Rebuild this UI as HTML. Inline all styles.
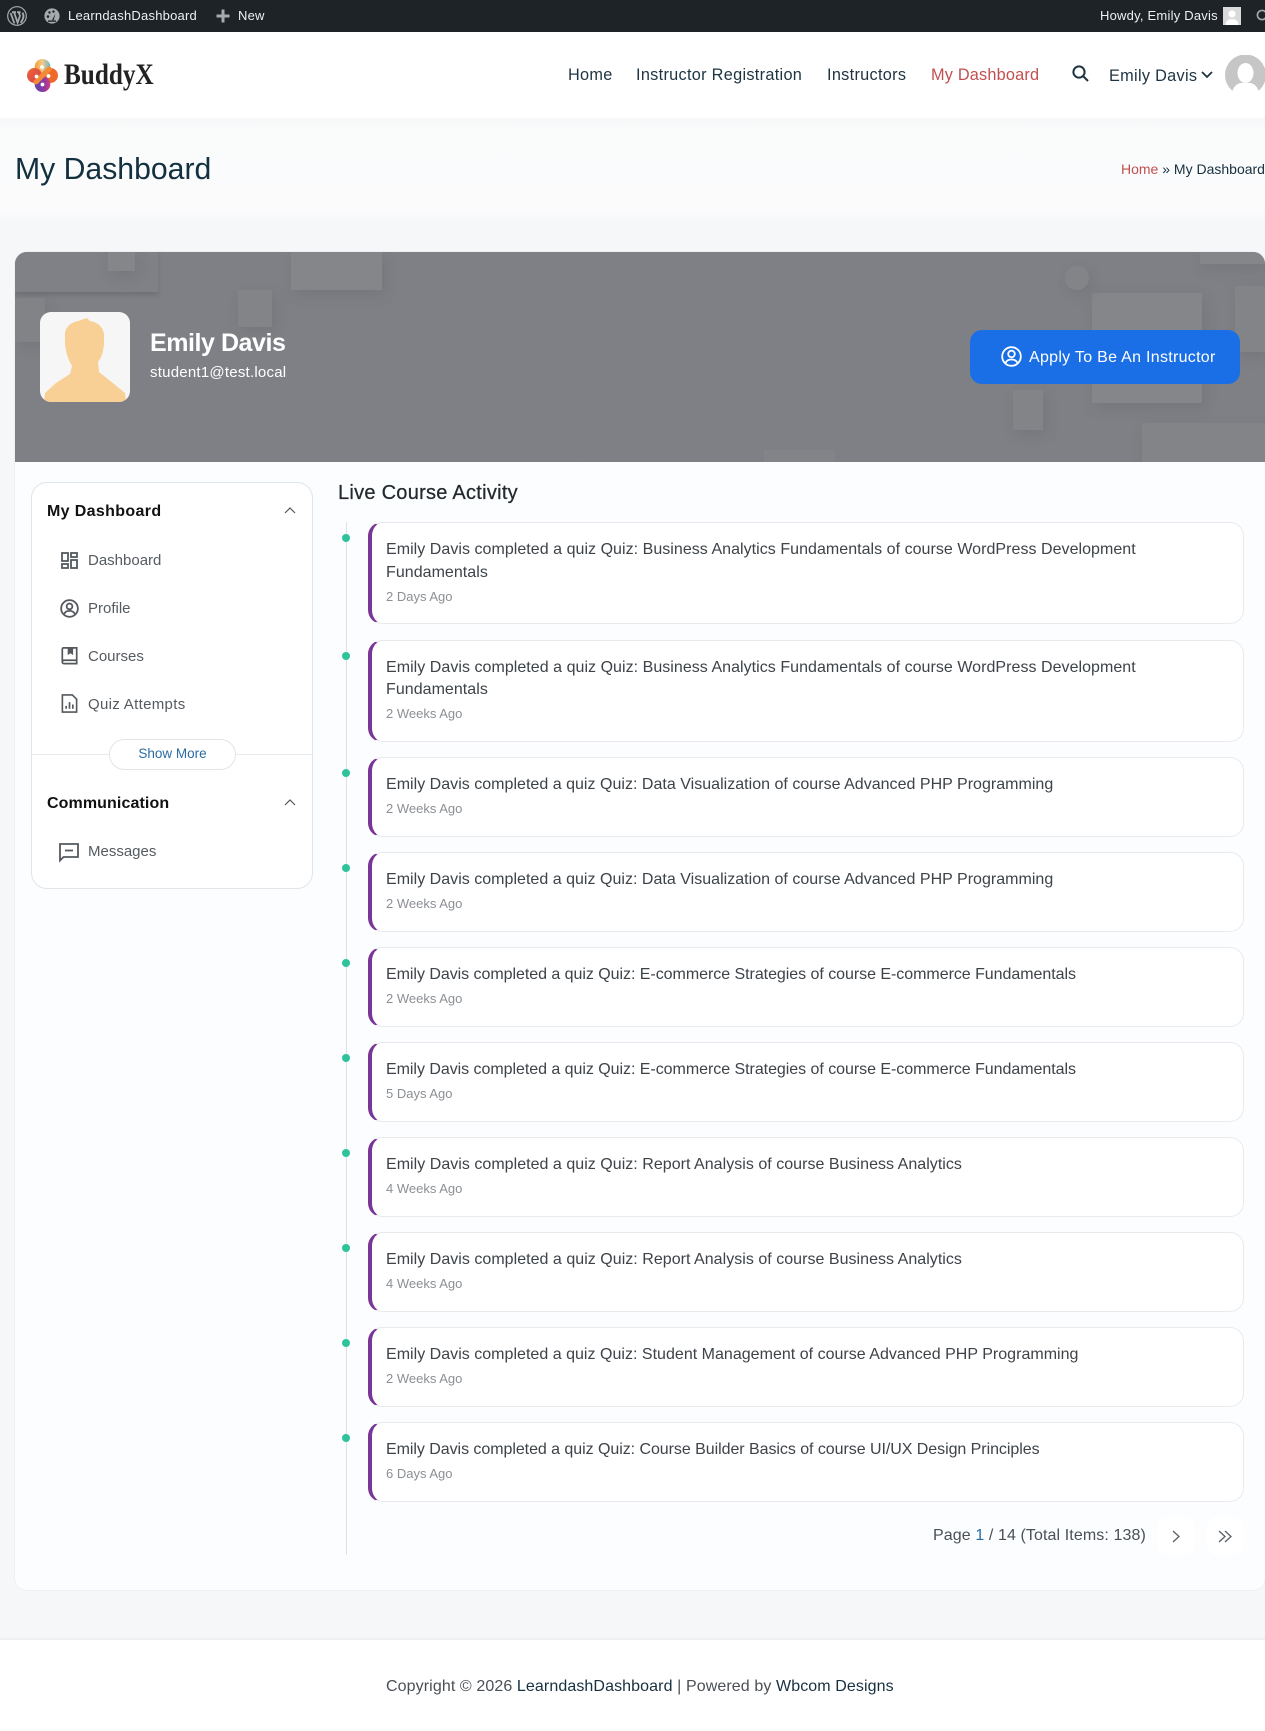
<!DOCTYPE html>
<html lang="en">
<head>
<meta charset="utf-8">
<title>My Dashboard</title>
<style>
html,body{margin:0;padding:0}
body{width:1265px;height:1731px;position:relative;overflow:hidden;background:#f6f7f9;font-family:"Liberation Sans",sans-serif;color:#333a40}
.a{position:absolute;white-space:nowrap}
a{color:inherit;text-decoration:none}
.bar{left:0;top:0;width:1265px;height:32px;background:#1d2327}
.bar .t{color:#eef0f1;font-size:13px;line-height:32px;top:0;letter-spacing:.22px}
.hdr{left:0;top:32px;width:1265px;height:86px;background:#fff}
.nav{font-size:16.3px;line-height:22px;top:64px;color:#1e3442;letter-spacing:.3px}
.sub{left:0;top:118px;width:1265px;height:102px;background:linear-gradient(#f6f7f8,#fafbfb 12%,#fbfbfc 90%,#f7f8fa)}
.panel{left:15px;top:252px;width:1250px;height:1338px;background:#fcfdfe;border-radius:12px;box-shadow:0 0 0 1px #eef0f3}
.banner{left:15px;top:252px;width:1250px;height:210px;background:#7e8085;border-radius:12px 12px 0 0;overflow:hidden}
.b{position:absolute;background:#84868a;box-shadow:3px 5px 14px rgba(66,68,76,.16)}
.side{left:31px;top:482px;width:280px;height:405px;background:#fff;border:1px solid #e1e4e8;border-radius:16px}
.sh{left:47px;font-size:16px;font-weight:700;color:#111;line-height:22px;letter-spacing:.35px}
.si{left:88px;font-size:15px;line-height:22px;color:#565b60}
.card{position:absolute;left:368px;width:871px;background:#fff;border:1px solid #e8eaed;border-left:4px solid #7a3696;border-radius:14px;box-sizing:content-box}
.card p{position:absolute;left:14px;top:15px;margin:0;width:800px;font-size:16px;line-height:23px;color:#3d4348;letter-spacing:.02px}
.card span{position:absolute;left:14px;font-size:13px;line-height:18px;color:#8b8f94;white-space:nowrap}
.dot{position:absolute;left:342px;width:8px;height:8px;border-radius:50%;background:#2fc39c}
svg{position:absolute;display:block;overflow:visible}
</style>
</head>
<body>

<div class="a bar">
  <svg style="left:7px;top:6px" width="20" height="20" viewBox="0 0 20 20" fill="none" stroke="#a7aaad">
    <circle cx="10" cy="10" r="9.3" stroke-width="1.2"/>
    <path d="M3.6 7 L7.4 17.4 M5 6.2 H9 M7 6.2 L10.6 16.6 L13 9.8 L11.6 6.2 M10 6.2 H13.6 M15.4 6.6 C17.4 9.5 16.8 12.6 13.6 16.8" stroke-width="1.8"/>
  </svg>
  <svg style="left:44px;top:8px" width="16" height="16" viewBox="0 0 16 16">
    <circle cx="8" cy="8" r="7.6" fill="#a7aaad"/>
    <circle cx="4" cy="8.5" r="1.3" fill="#1d2327"/><circle cx="5.5" cy="4.5" r="1.2" fill="#1d2327"/><circle cx="9.5" cy="3.6" r="1.2" fill="#1d2327"/>
    <path d="M8 12 L11.5 5.6 L9.6 12.4 Z" fill="#1d2327"/><rect x="4" y="12.4" width="8" height="1.4" fill="#1d2327"/>
  </svg>
  <div class="a t" style="left:68px">LearndashDashboard</div>
  <svg style="left:216px;top:9px" width="14" height="14" viewBox="0 0 14 14"><path d="M5.5 0.5h3v5h5v3h-5v5h-3v-5h-5v-3h5z" fill="#a7aaad"/></svg>
  <div class="a t" style="left:238px">New</div>
  <div class="a t" style="left:1100px">Howdy, Emily Davis</div>
  <div class="a" style="left:1223px;top:7px;width:18px;height:18px;background:#d9d9d9;overflow:hidden">
    <svg width="18" height="18" viewBox="0 0 18 18"><circle cx="9" cy="7" r="3.6" fill="#fff"/><path d="M2.5 18 Q3 12 9 12 Q15 12 15.5 18Z" fill="#fff"/></svg>
  </div>
  <svg style="left:1256px;top:9px" width="14" height="14" viewBox="0 0 14 14" fill="none"><circle cx="6" cy="6" r="4.6" stroke="#a7aaad" stroke-width="1.6"/><path d="M9.4 9.4L13 13" stroke="#a7aaad" stroke-width="1.6"/></svg>
</div>

<div class="a hdr"></div>
<svg style="left:27px;top:59px" width="31" height="33" viewBox="0 0 31 33">
  <defs>
    <linearGradient id="lt" x1="0" y1="0" x2="1" y2="0"><stop offset="0" stop-color="#f4a02c"/><stop offset=".5" stop-color="#f5c98a"/><stop offset="1" stop-color="#63b6c9"/></linearGradient>
    <linearGradient id="lb" x1="0" y1="0" x2="1" y2="0"><stop offset="0" stop-color="#5d46b0"/><stop offset=".6" stop-color="#8d3aa0"/><stop offset="1" stop-color="#d13f78"/></linearGradient>
    <linearGradient id="ll" x1="0" y1="0" x2="1" y2="1"><stop offset="0" stop-color="#f0692e"/><stop offset="1" stop-color="#d33a5a"/></linearGradient>
  </defs>
  <path d="M15.5 4 L28 16.5 L15.5 29 L3 16.5Z" fill="#ee7b30"/>
  <circle cx="15.5" cy="7.800" r="7.800" fill="url(#lt)"/>
  <circle cx="7.500" cy="16.500" r="7.500" fill="url(#ll)"/>
  <circle cx="23.500" cy="16.500" r="7.500" fill="#ee6a2b"/>
  <circle cx="15.500" cy="25.200" r="7.800" fill="url(#lb)"/>
  <path d="M9 23 L22 10" stroke="#f58a35" stroke-width="5" stroke-linecap="round"/>
  <circle cx="15" cy="8" r="1.900" fill="#fff"/><circle cx="21.500" cy="17" r="1.900" fill="#fff"/>
  <circle cx="9.500" cy="17.500" r="1.900" fill="#fff"/><circle cx="15.500" cy="25.500" r="1.900" fill="#fff"/>
</svg>
<div class="a" style="left:64px;top:56px;font:700 30px/38px 'Liberation Serif',serif;color:#222;transform:scaleX(.84);transform-origin:0 50%">BuddyX</div>
<a class="a nav" style="left:568px">Home</a>
<a class="a nav" style="left:636px">Instructor Registration</a>
<a class="a nav" style="left:827px">Instructors</a>
<a class="a nav" style="left:931px;color:#c0504f;letter-spacing:.2px">My Dashboard</a>
<svg style="left:1072px;top:65px" width="17" height="17" viewBox="0 0 17 17" fill="none" stroke="#1e3442" stroke-width="2"><circle cx="7" cy="7" r="5.6"/><path d="M11 11l5 5"/></svg>
<div class="a nav" style="left:1109px;top:65px">Emily Davis</div>
<svg style="left:1201px;top:71px" width="12" height="8" viewBox="0 0 12 8" fill="none" stroke="#1e3442" stroke-width="1.8"><path d="M1 1l5 5 5-5"/></svg>
<div class="a" style="left:1225px;top:55px;width:40px;height:37px;overflow:hidden">
  <svg width="42" height="37" viewBox="0 0 42 37">
    <circle cx="20.500" cy="20" r="20.500" fill="#c6c6c6"/>
    <ellipse cx="20.500" cy="18" rx="8" ry="10" fill="#fff"/>
    <path d="M7 37 Q9 30 15 28 L26 28 Q32 30 34 37Z" fill="#fff"/>
  </svg>
</div>

<div class="a sub"></div>
<div class="a" style="left:15px;top:149.500px;font-size:30.200px;line-height:40px;color:#12303f">My Dashboard</div>
<div class="a" style="left:1121px;top:159px;font-size:14px;line-height:20px;color:#17303f"><span style="color:#c0504f">Home</span> » My Dashboard</div>

<div class="a panel"></div>
<div class="a banner">
  <div class="b" style="left:0;top:-10px;width:143px;height:50px;background:#7f8186;box-shadow:0 3px 4px rgba(66,68,76,.25)"></div>
  <div class="b" style="left:93px;top:0;width:27px;height:19px"></div>
  <div class="b" style="left:276px;top:0;width:91px;height:38px;background:#848689"></div>
  <div class="b" style="left:223px;top:38px;width:34px;height:37px;background:#828488"></div>
  <div class="b" style="left:0;top:46px;width:30px;height:44px;background:#818387"></div>
  <div class="b" style="left:1185px;top:0;width:65px;height:12px"></div>
  <div class="b" style="left:1220px;top:34px;width:30px;height:66px;background:#828488"></div>
  <div class="b" style="left:1077px;top:41px;width:110px;height:110px;background:#84868a"></div>
  <div class="b" style="left:1050px;top:14px;width:24px;height:24px;border-radius:50%;background:#828488"></div>
  <div class="b" style="left:998px;top:138px;width:30px;height:40px;background:#828488"></div>
  <div class="b" style="left:1127px;top:171px;width:123px;height:40px;background:#828488"></div>
  <div class="b" style="left:749px;top:198px;width:70px;height:12px;box-shadow:none;background:#828488"></div>
  <div style="position:absolute;left:567px;top:0;width:1px;height:210px;background:#808287"></div>
</div>
<div class="a" style="left:40px;top:312px;width:90px;height:90px;background:#f6f6f6;border-radius:11px;overflow:hidden">
  <svg width="90" height="90" viewBox="0 0 90 90"><path d="M4 90 L5 81 L16 71 L30 62 L32 54 Q26 44 25 32 L25 20 Q28 11 38 9 L47 6 L50 9 Q62 11 64 22 L64 32 Q63 44 58 50 L59 60 L74 72 L85 81 L86 90Z" fill="#f8cf95"/></svg>
</div>
<div class="a" style="left:150px;top:326.500px;font-size:25px;font-weight:700;line-height:32px;color:#fff;letter-spacing:-.45px">Emily Davis</div>
<div class="a" style="left:150px;top:362.500px;font-size:15px;line-height:20px;color:#fff;letter-spacing:.23px">student1@test.local</div>
<div class="a" style="left:970px;top:330px;width:270px;height:54px;background:#1a6fe6;border-radius:12px"></div>
<svg style="left:1001px;top:346px" width="21" height="21" viewBox="0 0 21 21" fill="none" stroke="#fff" stroke-width="1.800"><circle cx="10.500" cy="10.500" r="9.300"/><circle cx="10.500" cy="8" r="3.300"/><path d="M4.500 17 Q6 13.500 10.500 13.500 Q15 13.500 16.500 17"/></svg>
<div class="a" style="left:1029px;top:347px;font-size:16px;line-height:22px;color:#fff;letter-spacing:.29px">Apply To Be An Instructor</div>

<div class="a side"></div>
<div class="a sh" style="top:501px">My Dashboard</div>
<svg style="left:284px;top:507px" width="12" height="7" viewBox="0 0 12 7" fill="none" stroke="#555" stroke-width="1.2"><path d="M1 6l5-5 5 5"/></svg>

<svg style="left:61px;top:552px" width="17" height="17" viewBox="0 0 17 17" fill="none" stroke="#54595e" stroke-width="1.800"><rect x="1" y="1" width="6" height="8"/><rect x="10" y="1" width="6" height="4"/><rect x="1" y="12" width="6" height="4"/><rect x="10" y="8" width="6" height="8"/></svg>
<div class="a si" style="top:550px">Dashboard</div>
<svg style="left:60px;top:599px" width="19" height="19" viewBox="0 0 20 20" fill="none" stroke="#54595e" stroke-width="1.900"><circle cx="10" cy="10" r="8.800"/><circle cx="10" cy="7.800" r="3"/><path d="M4.300 16 Q5.500 12.500 10 12.500 Q14.500 12.500 15.700 16"/></svg>
<div class="a si" style="top:598px">Profile</div>
<svg style="left:61px;top:647px" width="17" height="18" viewBox="0 0 18 20" fill="none" stroke="#54595e" stroke-width="1.900"><path d="M1 16V2.500Q1 1 2.500 1H17V18.500H3Q1 18.500 1 16.500Q1 14.700 3 14.700H17"/><path d="M7 1.500H13V9L10 7 7 9Z" fill="#54595e" stroke="none"/></svg>
<div class="a si" style="top:646px">Courses</div>
<svg style="left:61px;top:694px" width="17" height="19" viewBox="0 0 17 20" fill="none" stroke="#54595e" stroke-width="1.700"><path d="M1 1H11.500L16 5.500V19H1Z"/><path d="M5 15.500V12.500M8.500 15.500V8.500M12 15.500V11" stroke-width="1.800"/></svg>
<div class="a si" style="top:694px;letter-spacing:.32px">Quiz Attempts</div>

<div class="a" style="left:32px;top:754px;width:280px;height:1px;background:#e8eaed"></div>
<div class="a" style="left:109px;top:739px;width:125px;height:29px;background:#fff;border:1px solid #e1e4e8;border-radius:16px;text-align:center;font-size:13.500px;line-height:28px;color:#2b6ca3">Show More</div>

<div class="a sh" style="top:793px;letter-spacing:.1px">Communication</div>
<svg style="left:284px;top:799px" width="12" height="7" viewBox="0 0 12 7" fill="none" stroke="#555" stroke-width="1.2"><path d="M1 6l5-5 5 5"/></svg>
<svg style="left:59px;top:843px" width="20" height="19" viewBox="0 0 20 19" fill="none" stroke="#54595e" stroke-width="1.800"><path d="M1 1H19V14H4.500L1 17.500Z"/><path d="M6 7.500H14"/></svg>
<div class="a si" style="top:841px">Messages</div>

<div class="a" style="left:338px;top:480px;font-size:20px;font-weight:400;line-height:26px;color:#23292e;-webkit-text-stroke:.25px #23292e;letter-spacing:.27px">Live Course Activity</div>
<div class="a" style="left:346px;top:522px;width:1px;height:1033px;background:#dde1e5"></div>

<div class="dot" style="top:534px"></div>
<div class="card" style="top:522px;height:100px"><p style="letter-spacing:.04px">Emily Davis completed a quiz Quiz: Business Analytics Fundamentals of course WordPress Development Fundamentals</p><span style="top:65px">2 Days Ago</span></div>
<div class="dot" style="top:652px"></div>
<div class="card" style="top:640px;height:100px"><p style="letter-spacing:.04px;line-height:22px;top:16px">Emily Davis completed a quiz Quiz: Business Analytics Fundamentals of course WordPress Development Fundamentals</p><span style="top:64px">2 Weeks Ago</span></div>
<div class="dot" style="top:769px"></div>
<div class="card" style="top:757px;height:78px"><p>Emily Davis completed a quiz Quiz: Data Visualization of course Advanced PHP Programming</p><span style="top:42px">2 Weeks Ago</span></div>
<div class="dot" style="top:864px"></div>
<div class="card" style="top:852px;height:78px"><p>Emily Davis completed a quiz Quiz: Data Visualization of course Advanced PHP Programming</p><span style="top:42px">2 Weeks Ago</span></div>
<div class="dot" style="top:959px"></div>
<div class="card" style="top:947px;height:78px"><p style="letter-spacing:-.04px">Emily Davis completed a quiz Quiz: E-commerce Strategies of course E-commerce Fundamentals</p><span style="top:42px">2 Weeks Ago</span></div>
<div class="dot" style="top:1054px"></div>
<div class="card" style="top:1042px;height:78px"><p style="letter-spacing:-.04px">Emily Davis completed a quiz Quiz: E-commerce Strategies of course E-commerce Fundamentals</p><span style="top:42px">5 Days Ago</span></div>
<div class="dot" style="top:1149px"></div>
<div class="card" style="top:1137px;height:78px"><p style="letter-spacing:.03px">Emily Davis completed a quiz Quiz: Report Analysis of course Business Analytics</p><span style="top:42px">4 Weeks Ago</span></div>
<div class="dot" style="top:1244px"></div>
<div class="card" style="top:1232px;height:78px"><p style="letter-spacing:.03px">Emily Davis completed a quiz Quiz: Report Analysis of course Business Analytics</p><span style="top:42px">4 Weeks Ago</span></div>
<div class="dot" style="top:1339px"></div>
<div class="card" style="top:1327px;height:78px"><p>Emily Davis completed a quiz Quiz: Student Management of course Advanced PHP Programming</p><span style="top:42px">2 Weeks Ago</span></div>
<div class="dot" style="top:1434px"></div>
<div class="card" style="top:1422px;height:78px"><p style="letter-spacing:-.05px">Emily Davis completed a quiz Quiz: Course Builder Basics of course UI/UX Design Principles</p><span style="top:42px">6 Days Ago</span></div>

<div class="a" style="left:933px;top:1524px;font-size:16px;line-height:24px;color:#4a5056;letter-spacing:.1px">Page <span style="color:#2b6ca3">1</span> / 14 (Total Items: 138)</div>
<div class="a" style="left:1157px;top:1517px;width:38px;height:38px;background:#fff;border-radius:12px"></div>
<div class="a" style="left:1206px;top:1517px;width:38px;height:38px;background:#fff;border-radius:12px"></div>
<svg style="left:1172px;top:1530px" width="9" height="13" viewBox="0 0 9 13" fill="none" stroke="#5b6065" stroke-width="1.300"><path d="M1 1l6 5.500-6 5.500"/></svg>
<svg style="left:1218px;top:1530px" width="15" height="13" viewBox="0 0 15 13" fill="none" stroke="#5b6065" stroke-width="1.300"><path d="M1 1l6 5.500-6 5.500M7 1l6 5.500-6 5.500"/></svg>

<div class="a" style="left:0;top:1638px;width:1265px;height:92px;background:#fff;border-top:2px solid #eeeff1;box-sizing:border-box"></div>
<div class="a" style="left:386px;top:1676px;font-size:16px;line-height:22px;color:#4a5056;letter-spacing:.1px">Copyright © 2026 <span style="color:#17303f">LearndashDashboard</span> | Powered by <span style="color:#17303f">Wbcom Designs</span></div>

</body>
</html>
